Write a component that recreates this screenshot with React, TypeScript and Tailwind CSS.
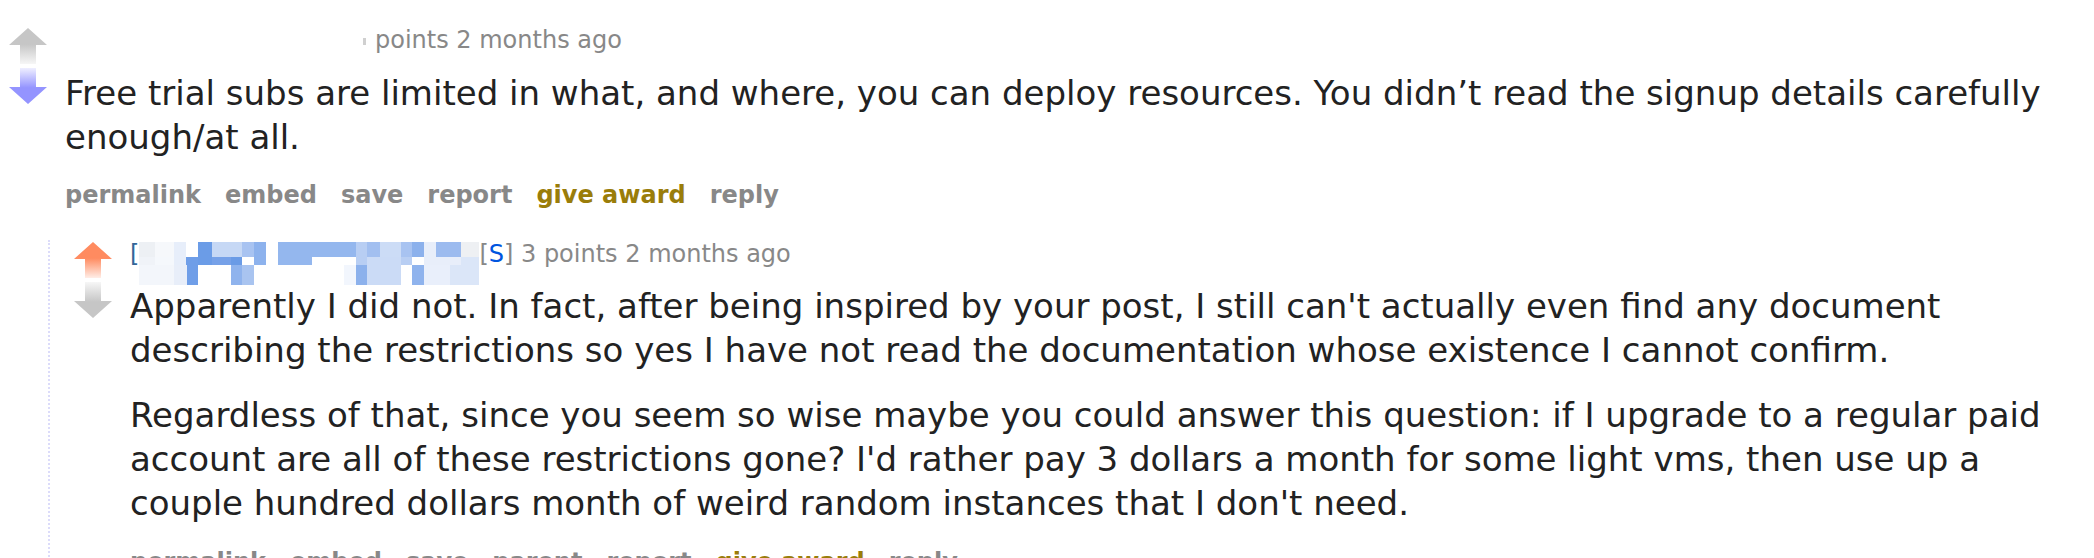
import React from 'react';

type Cell = [number, string];

// redacted username mosaic, three bands of blurred blocks
const mosaic: { h: number; cells: Cell[] }[] = [
  {
    h: 15,
    cells: [
      [16, '#edf0f4'], [19, '#f6f8fb'], [12, '#e7eefa'], [12, '#ffffff'], [14, '#6b9ce7'],
      [30, '#c6d8f5'], [12, '#a8c3f1'], [12, '#8db2ed'], [12, '#ffffff'], [78, '#94b7ee'],
      [11, '#b8cef3'], [13, '#a2bff0'], [21, '#ccdcf6'], [11, '#a8c3f1'], [12, '#8cb1ec'],
      [12, '#e8eefa'], [25, '#9cbbef'], [18, '#eef0f3'],
    ],
  },
  {
    h: 8,
    cells: [
      [16, '#f0f3f8'], [19, '#f5f8fc'], [12, '#e7eefa'], [12, '#6f9ee8'], [14, '#6b9ce7'],
      [19, '#76a1e8'], [11, '#6a9be6'], [12, '#ffffff'], [12, '#8db2ed'], [12, '#ffffff'],
      [34, '#94b7ee'], [44, '#ffffff'], [11, '#b8cef3'], [34, '#cbdbf6'], [11, '#b8cef3'],
      [12, '#ffffff'], [37, '#e8eefa'], [18, '#dbe6f8'],
    ],
  },
  {
    h: 20,
    cells: [
      [35, '#f3f6fb'], [13, '#e8eef9'], [11, '#6f9ee8'], [33, '#ffffff'], [11, '#8fb3ed'],
      [12, '#a9c4f0'], [90, '#ffffff'], [12, '#f2f6fd'], [11, '#8cb1ec'], [34, '#cbdbf6'],
      [11, '#ffffff'], [12, '#8fb3ed'], [26, '#e9effb'], [29, '#dbe6f8'],
    ],
  },
];

function Mosaic() {
  return (
    <div className="absolute left-0 top-[2px] flex flex-col">
      {mosaic.map((row, i) => (
        <div key={i} className="flex" style={{ height: row.h }}>
          {row.cells.map(([w, c], j) => (
            <div key={j} style={{ width: w, backgroundColor: c }} />
          ))}
        </div>
      ))}
    </div>
  );
}

function Arrow({ dir, color }: { dir: 'up' | 'down'; color: string }) {
  const id = `g-${dir}-${color.slice(1)}`;
  return (
    <svg width="38" height="36" viewBox="0 0 38 36" className="block">
      <defs>
        <linearGradient id={id} x1="0" y1={dir === 'up' ? '0' : '1'} x2="0" y2={dir === 'up' ? '1' : '0'}>
          <stop offset="0.45" stopColor={color} />
          <stop offset="1" stopColor={color} stopOpacity="0.15" />
        </linearGradient>
      </defs>
      {dir === 'up' ? (
        <path d="M19 0 L38 17 L27 17 L27 36 L11 36 L11 17 L0 17 Z" fill={`url(#${id})`} />
      ) : (
        <path d="M11 0 L27 0 L27 19 L38 19 L19 36 L0 19 L11 19 Z" fill={`url(#${id})`} />
      )}
    </svg>
  );
}

function Votes({ up, down }: { up: string; down: string }) {
  return (
    <div className="flex flex-col gap-[4px] pt-[2px] w-[38px] shrink-0">
      <Arrow dir="up" color={up} />
      <Arrow dir="down" color={down} />
    </div>
  );
}

function Buttons({ items }: { items: string[] }) {
  return (
    <ul className="flex gap-[24px] text-[24px] leading-[28px] font-bold text-[#888] font-['DejaVu_Sans',sans-serif]">
      {items.map((t) => (
        <li key={t} className={t === 'give award' ? 'text-[#9a7d0a]' : ''}>
          {t}
        </li>
      ))}
    </ul>
  );
}

const body = "text-[34px] leading-[44px] text-[#222] font-['DejaVu_Sans',sans-serif]";
const tagline = "text-[24px] leading-[28px] text-[#888] font-['DejaVu_Sans',sans-serif]";

export default function App() {
  return (
    <div className="min-h-screen bg-white pl-[9px] pr-[20px] pt-[26px]">
      {/* parent comment */}
      <div className="flex gap-[18px]">
        <Votes up="#c6c6c6" down="#9494ff" />
        <div className="flex-1 min-w-0">
          <p className={tagline}>
            <span className="inline-flex w-[310px] justify-end pr-[9px] align-middle">
              <span className="inline-block w-[3px] h-[7px] bg-[#d0d0d0]" />
            </span>
            points 2 months ago
          </p>
          <p className={`${body} mt-[17px]`}>
            Free trial subs are limited in what, and where, you can deploy resources. You didn’t read the signup details carefully enough/at all.
          </p>
          <div className="mt-[22px]">
            <Buttons items={['permalink', 'embed', 'save', 'report', 'give award', 'reply']} />
          </div>
        </div>
      </div>

      {/* child comment */}
      <div className="ml-[39px] mt-[31px] border-l-2 border-dotted border-[#dcdcfa] pl-[24px]">
        <div className="flex gap-[18px]">
          <Votes up="#ff8b60" down="#c6c6c6" />
          <div className="flex-1 min-w-0">
            <p className={tagline}>
              <span className="text-[#336699]">[</span>
              <span className="relative inline-block w-[340px] h-[28px] align-top">
                <Mosaic />
              </span>
              <span>[</span>
              <span className="text-[#0055df]">S</span>
              <span>]</span> 3 points 2 months ago
            </p>
            <div className={`${body} mt-[16px]`}>
              <p>
                Apparently I did not. In fact, after being inspired by your post, I still can't actually even find any document describing the restrictions so yes I have not read the documentation whose existence I cannot confirm.
              </p>
              <p className="mt-[21px]">
                Regardless of that, since you seem so wise maybe you could answer this question: if I upgrade to a regular paid account are all of these restrictions gone? I'd rather pay 3 dollars a month for some light vms, then use up a couple hundred dollars month of weird random instances that I don't need.
              </p>
            </div>
            <div className="mt-[23px] pb-[20px]">
              <Buttons items={['permalink', 'embed', 'save', 'parent', 'report', 'give award', 'reply']} />
            </div>
          </div>
        </div>
      </div>
    </div>
  );
}
